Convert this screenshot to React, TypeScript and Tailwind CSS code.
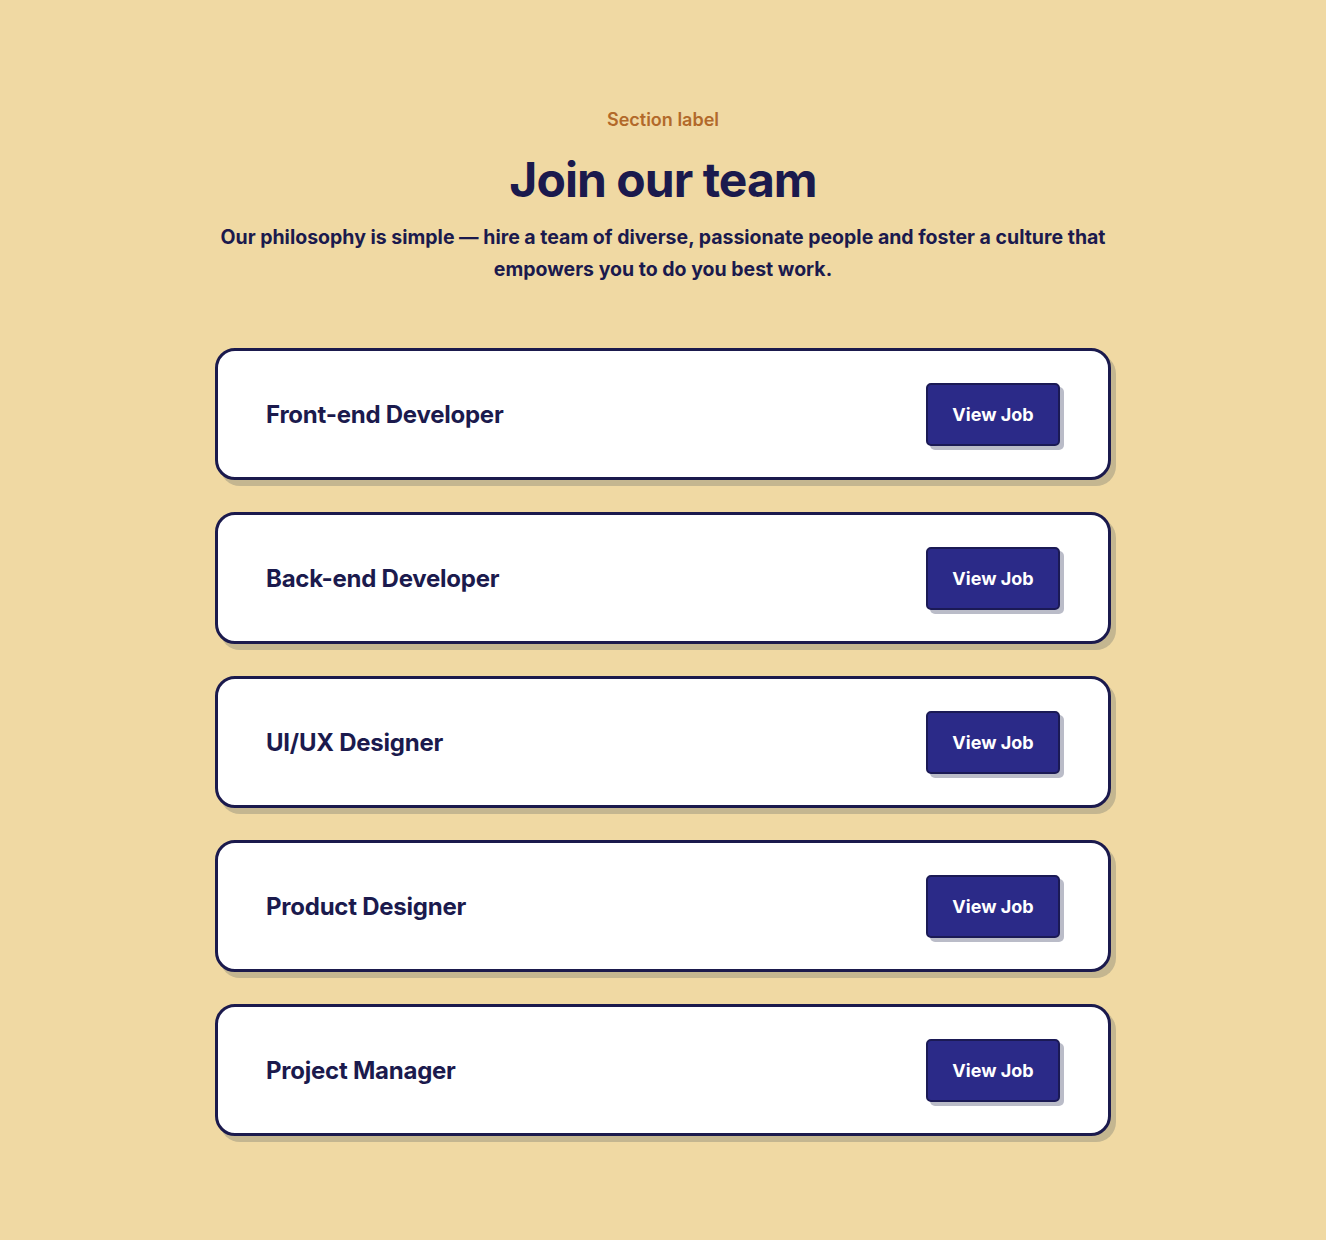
import React from 'react';

const jobs = ['Front-end Developer', 'Back-end Developer', 'UI/UX Designer', 'Product Designer', 'Project Manager'];

const JobCard: React.FC<{ title: string }> = ({ title }) => (
  <div className="flex h-[132px] items-center justify-between rounded-[20px] border-[3px] border-[#1b1a4d] bg-white px-[48px] shadow-[5px_6px_0_#c4b690]">
    <h3 className="pt-[2px] text-[24px] font-bold tracking-[-0.01em] text-[#1b1a4d]">{title}</h3>
    <button
      type="button"
      className="h-[63px] w-[134px] rounded-[5px] border-2 border-[#1b1a55] bg-[#2b2a88] text-[18px] font-bold text-white shadow-[4px_4px_0_#babcc8]"
    >
      View Job
    </button>
  </div>
);

export default function App() {
  return (
    <div className="min-h-[1240px] bg-[#f0d9a3] pb-[100px] pt-[108px] font-['Inter',sans-serif]">
      <div className="mx-auto w-[896px]">
        {/* Header */}
        <div className="text-center">
          <p className="text-[18px] font-semibold leading-6 text-[#b2692a]">Section label</p>
          <h1 className="mt-5 text-[48px] font-bold leading-[56px] tracking-[-0.02em] text-[#1b1a4d]">Join our team</h1>
          <p className="mt-[13px] text-[19.5px] font-bold leading-8 text-[#1b1a4d]">
            Our philosophy is simple — hire a team of diverse, passionate people and foster a culture that empowers you to do you best work.
          </p>
        </div>

        {/* Job list */}
        <div className="mt-[63px] flex flex-col gap-[32px]">
          {jobs.map((job) => (
            <JobCard key={job} title={job} />
          ))}
        </div>
      </div>
    </div>
  );
}
